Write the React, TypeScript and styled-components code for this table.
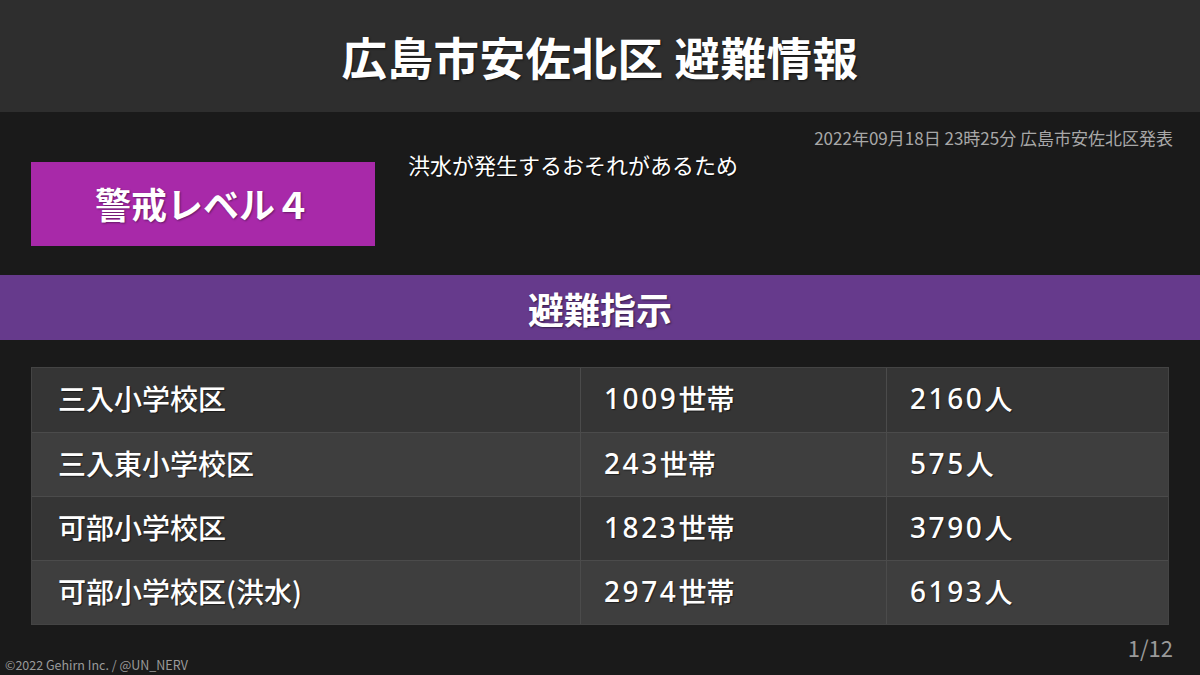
import React from 'react';
import styled, { createGlobalStyle } from 'styled-components';

const GlobalStyle = createGlobalStyle`
  html, body {
    margin: 0;
    padding: 0;
    background: #1a1a1a;
  }
  body {
    font-family: "Noto Sans CJK JP", "Noto Sans", sans-serif;
    color: #ffffff;
  }
`;

const Page = styled.div`
  width: 1200px;
  height: 675px;
  background: #1a1a1a;
  display: flex;
  flex-direction: column;
  overflow: hidden;
  & > * {
    flex-shrink: 0;
  }
`;

const Header = styled.header`
  height: 112px;
  background: #2e2e2e;
  display: flex;
  align-items: center;
  justify-content: center;
`;

const Title = styled.h1`
  margin: 0;
  font-size: 45.5px;
  font-weight: 700;
  letter-spacing: 0.5px;
  text-shadow: 1px 1px 2px rgba(0, 0, 0, 0.6);
`;

const InfoArea = styled.section`
  height: 163px;
  display: grid;
  grid-template-columns: 344px 1fr;
  grid-template-rows: 50px 84px;
  column-gap: 33px;
  padding: 0 27px 0 31px;
`;

const Issued = styled.div`
  grid-column: 1 / 3;
  grid-row: 1;
  text-align: right;
  font-size: 17px;
  color: #a8a8a8;
  padding-top: 14px;
  line-height: 24px;
`;

const LevelBox = styled.div`
  grid-column: 1;
  grid-row: 2;
  background: #a829a9;
  display: flex;
  align-items: center;
  justify-content: center;
  padding-bottom: 2px;
  font-size: 36px;
  font-weight: 700;
  text-shadow: 1px 1px 2px rgba(0, 0, 0, 0.4);
`;

const Reason = styled.div`
  grid-column: 2;
  grid-row: 1 / 3;
  margin-top: 37px;
  font-size: 22px;
  line-height: 30px;
  text-shadow: 1px 1px 1px rgba(0, 0, 0, 0.6);
`;

const Band = styled.div`
  height: 65px;
  background: #663a8c;
  display: flex;
  align-items: center;
  justify-content: center;
  font-size: 36px;
  font-weight: 700;
  text-shadow: 1px 1px 2px rgba(0, 0, 0, 0.5);
`;

const Table = styled.div`
  margin: 27px 31px 0 31px;
  width: 1138px;
  border: 1px solid #444444;
  box-sizing: border-box;
`;

const Row = styled.div<{ $alt: boolean }>`
  display: grid;
  grid-template-columns: 548px 306px 1fr;
  height: 64px;
  box-sizing: border-box;
  background: ${({ $alt }) => ($alt ? '#3e3e3e' : '#353535')};
  & + & {
    border-top: 1px solid #4b4b4b;
  }
`;

const Cell = styled.div`
  display: flex;
  align-items: center;
  padding: 0 0 4px 26px;
  font-size: 28px;
  font-weight: 500;
  text-shadow: 1px 1px 1px rgba(0, 0, 0, 0.5);
  & + & {
    border-left: 1px solid #4b4b4b;
    padding-left: 23px;
  }
`;

const Num = styled.span`
  font-family: "Noto Sans", sans-serif;
  letter-spacing: 2.6px;
`;

const Footer = styled.footer`
  flex: 1 1 auto;
  min-height: 0;
  display: flex;
  flex-direction: column;
  padding: 11px 27px 0 5px;
`;

const PageNo = styled.div`
  text-align: right;
  font-size: 22px;
  color: #9a9a9a;
  line-height: 22px;
`;

const Copyright = styled.div`
  font-size: 12.5px;
  color: #9a9a9a;
  line-height: 14px;
`;

const rows = [
  { area: '三入小学校区', households: '1009', people: '2160' },
  { area: '三入東小学校区', households: '243', people: '575' },
  { area: '可部小学校区', households: '1823', people: '3790' },
  { area: '可部小学校区(洪水)', households: '2974', people: '6193' },
];

export default function App() {
  return (
    <Page>
      <GlobalStyle />
      <Header>
        <Title>広島市安佐北区 避難情報</Title>
      </Header>
      <InfoArea>
        <Issued>2022年09月18日 23時25分 広島市安佐北区発表</Issued>
        <LevelBox>警戒レベル４</LevelBox>
        <Reason>洪水が発生するおそれがあるため</Reason>
      </InfoArea>
      <Band>避難指示</Band>
      <Table>
        {rows.map((r, i) => (
          <Row key={r.area} $alt={i % 2 === 1}>
            <Cell>{r.area}</Cell>
            <Cell>
              <Num>{r.households}</Num>世帯
            </Cell>
            <Cell>
              <Num>{r.people}</Num>人
            </Cell>
          </Row>
        ))}
      </Table>
      <Footer>
        <PageNo>1/12</PageNo>
        <Copyright>©2022 Gehirn Inc. / @UN_NERV</Copyright>
      </Footer>
    </Page>
  );
}
